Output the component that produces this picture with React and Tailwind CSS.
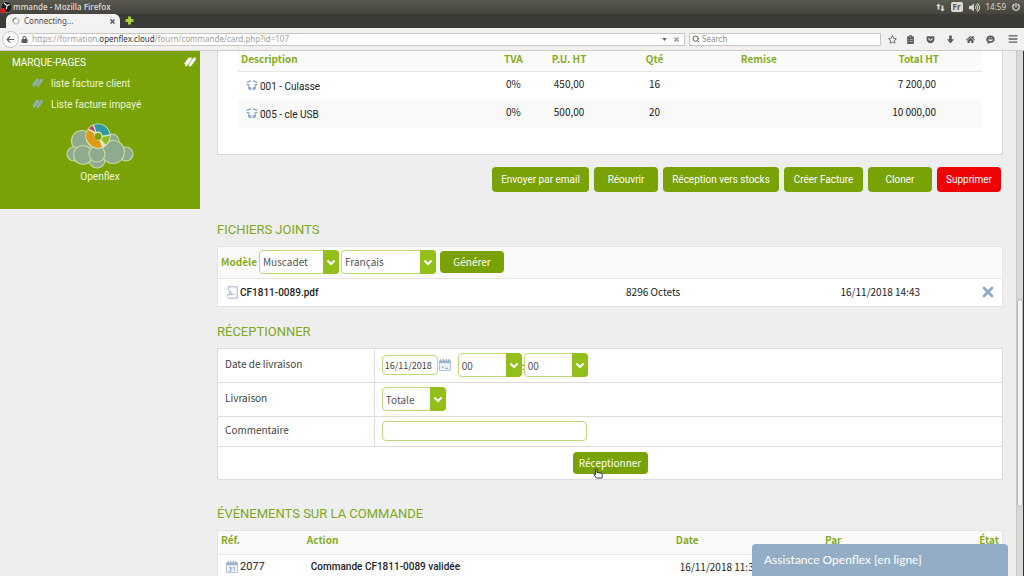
import React from "react";
import { FaRegStar, FaHome, FaBars, FaLock, FaPowerOff, FaVolumeUp, FaGetPocket } from "react-icons/fa";
import { FaArrowLeft, FaClipboardList } from "react-icons/fa6";
import { Search, X } from "lucide-react";

const items = [
    { label: "001 - Culasse", tva: "0%", price: "450,00", qty: "16", total: "7 200,00" },
    { label: "005 - cle USB", tva: "0%", price: "500,00", qty: "20", total: "10 000,00" },
];

const actions = [
    { name: "Envoyer par email", width: "w-[97px]" },
    { name: "Réouvrir", width: "w-16" },
    { name: "Réception vers stocks", width: "w-[116px]" },
    { name: "Créer Facture", width: "w-[79px]" },
    { name: "Cloner", width: "w-16" },
];

function BookmarkIcon({ className }) {
    return (
        <svg viewBox="0 0 12 10" className={className} fill="currentColor" aria-hidden="true">
            <path d="M0.2 6.6 4.4 1 6.4 0.2 7.8 0.8 7.4 2.8 3.6 8.2 1.6 9.8 1.3 7.6Z" />
            <path d="M4.4 8.2 8.8 1.4 10.6 0.2 11.9 1 11.6 3 7.6 8.6 5.6 9.9 5.3 8.6Z" />
        </svg>
    );
}

function ProductIcon() {
    return (
        <svg viewBox="0 0 12 11" className="h-[11px] w-3 shrink-0" aria-hidden="true">
            <path d="M0.6 2.4 4.8 0.9M7.2 0.9 11.4 2.4M0.6 4.4l3 0.8M11.4 4.4 8.4 5.2" stroke="#8ba6cc" strokeWidth="1.5" fill="none" />
            <path d="M2 6 5.4 7.6v2.8L2 9ZM10 6 6.6 7.6v2.8L10 9Z" fill="#8fa9cc" />
        </svg>
    );
}

function PdfIcon() {
    return (
        <svg viewBox="0 0 12 13" className="h-[13px] w-3 shrink-0" fill="none" stroke="#9fb2d2" strokeWidth="1" aria-hidden="true">
            <path d="M2.5 4.5V0.8h8.7v11.4H2.5v-1" />
            <path d="M0.6 10.4C2.6 9.2 4.4 6.6 4.2 4.4M4.2 4.8C4.4 7.4 6.4 8.8 8.4 8.6M2.6 8.8 6.6 8" />
        </svg>
    );
}

function CalendarIcon({ day }) {
    return (
        <svg viewBox="0 0 12 12" className="size-3 shrink-0" aria-hidden="true">
            <path d="M0.5 2.5h11v9h-11Z" fill="#eef3f9" stroke="#b4c5dc" />
            <path d="M0 1.6h12v2.6H0Z" fill="#9db4d3" />
            <path d="M2 0v2.4M4.6 0v2.4M7.2 0v2.4M9.8 0v2.4" stroke="#6f8cb8" strokeWidth="0.9" />
            {day ? (
                <path d="M3 6.4h2v1.4H3.6M5 6.4v3.8H3M7 6.8l1.2-0.6v4" stroke="#8fa9cc" fill="none" strokeWidth="0.9" />
            ) : (
                <path d="M2.5 8.2h2M6.2 9.4h3" stroke="#8fa9cc" strokeWidth="1.2" />
            )}
        </svg>
    );
}

function CloudLogo() {
    return (
        <svg viewBox="0 0 68 46" className="h-[46px] w-[68px]" aria-hidden="true">
            <g fill="#8eab90" stroke="#c6dba0" strokeWidth="1.2">
                <circle cx="46" cy="18" r="7" />
                <circle cx="16" cy="18" r="10.5" />
                <circle cx="8" cy="31" r="7" />
                <circle cx="60" cy="31" r="7" />
                <circle cx="31" cy="37" r="8" />
                <circle cx="17" cy="32" r="9.5" />
                <circle cx="47" cy="29" r="11.5" />
                <circle cx="31" cy="31" r="8" />
            </g>
            <circle cx="32" cy="13.2" r="12.6" fill="#dce9c4" />
            <path d="M28 1.8A12 12 0 0 1 43.8 11.6L36.5 12.4A4.6 4.6 0 0 0 30.4 8.7Z" fill="#2f9aa0" />
            <path d="M22.6 5.6A12 12 0 0 1 26.6 2.4L29.4 8.9Z" fill="#c93a6a" />
            <path d="M21.8 6.8A12 12 0 0 0 36 24L33.6 17.4A4.8 4.8 0 0 1 28.4 10.4Z" fill="#e09a12" />
            <path d="M36.8 14 44 12.8A12 12 0 0 1 39.5 21.8L35.4 16.6Z" fill="#8fbd22" />
            <circle cx="32" cy="13.4" r="3.4" fill="#78a206" />
        </svg>
    );
}

function GreenSelect({ id, label, value, width }) {
    return (
        <div className={`relative h-6 ${width}`}>
            <select
                id={id}
                aria-label={label}
                defaultValue={value}
                className="block h-full w-full appearance-none rounded border border-[#bcd977] bg-white pr-4 pl-[3px] text-[10px] font-normal text-[#555]"
            >
                <option>{value}</option>
            </select>
            <span className="pointer-events-none absolute inset-y-0 right-0 flex w-4 items-center justify-center rounded-r bg-[#93bf1b]">
                <svg viewBox="0 0 10 7" className="h-[7px] w-[10px]" fill="none" stroke="white" strokeWidth="2" aria-hidden="true">
                    <path d="M1.4 1.5 5 5 8.6 1.5" />
                </svg>
            </span>
        </div>
    );
}

function SectionTitle({ children, className }) {
    return <h2 className={`mb-1.5 font-[Roboto] text-[13px] leading-5 text-[#7fa81c] ${className}`}>{children}</h2>;
}

function BrowserChrome() {
    return (
        <header className="shrink-0 font-['Noto_Sans']">
            <div className="flex h-3.5 items-center justify-between bg-linear-to-b from-[#5a594f] to-[#45443e] pr-1 text-[8px] text-[#dfdbd2]">
                <div className="flex items-center">
                    <svg viewBox="0 0 13 13" className="size-[13px]" aria-hidden="true">
                        <circle cx="6.5" cy="6" r="5.6" fill="#1b1a1a" stroke="#8b8984" strokeWidth="0.7" />
                        <path d="M4 2.2 7 4.5 9.8 3.6M7 4.5 6.4 8" stroke="#dcdcdc" strokeWidth="1.3" fill="none" />
                        <circle cx="3" cy="9.6" r="2.6" fill="#f01414" />
                    </svg>
                    <span className="font-['Open_Sans'] font-semibold">mmande - Mozilla Firefox</span>
                </div>
                <div className="flex items-center gap-1.5">
                    <svg viewBox="0 0 9 9" className="size-[9px]" fill="currentColor" aria-hidden="true">
                        <path d="M2.5 0.5 4.8 3H3.4v3.5H1.6V3H0.2ZM6.5 8.5 4.2 6h1.4V2.5h1.8V6h1.4Z" />
                    </svg>
                    <span className="rounded-xs bg-[#dfdbd2] px-0.5 leading-[10px] font-bold text-[#55544c]">Fr</span>
                    <FaVolumeUp className="size-[11px]" />
                    <span>14:59</span>
                    <FaPowerOff className="size-2" />
                </div>
            </div>
            <div className="flex h-3.5 items-end bg-[#3c3b37]">
                <div className="ml-1.5 flex h-3.5 w-[114px] items-center rounded-t-md bg-[#f4f3f2] pr-1 pl-1.5 text-[8px] text-[#4c4c4c]">
                    <svg viewBox="0 0 8 8" className="mr-1 size-2" fill="none" stroke="#b5b5b5" strokeWidth="1.2" aria-hidden="true">
                        <circle cx="4" cy="4" r="3" />
                        <path d="M1 4A3 3 0 0 1 4 1" stroke="#777" />
                    </svg>
                    <span className="grow">Connecting…</span>
                    <X className="size-[7px]" strokeWidth={4} />
                </div>
                <svg viewBox="0 0 9 9" className="mb-[3px] ml-[5px] size-[9px]" fill="#a6cf3a" aria-hidden="true">
                    <path d="M3 0.5h3V3h2.5v3H6v2.5H3V6H0.5V3H3Z" />
                </svg>
            </div>
            <div className="flex h-[23px] items-center border-b border-[#cfcdca] bg-[#f2f1ef] pr-1.5 pl-0.5 text-[8px] text-[#5c5c5c]">
                <button type="button" aria-label="Back" className="flex size-[17px] shrink-0 items-center justify-center rounded-full border border-[#c4c2be] bg-white">
                    <FaArrowLeft className="size-[9px]" />
                </button>
                <div className="flex h-[13px] grow items-center border border-l-0 border-[#c9c7c3] bg-white pr-1 pl-0.5">
                    <FaLock className="mr-1 size-[7px] shrink-0" />
                    <span className="grow text-[#a0a0a0]">
                        https://formation.<span className="text-[#333]">openflex.cloud</span>/fourn/commande/card.php?id=107
                    </span>
                    <svg viewBox="0 0 6 4" className="mr-1.5 h-[3px] w-[5px]" fill="currentColor" aria-hidden="true">
                        <path d="M0 0h6L3 4Z" />
                    </svg>
                    <X className="size-[7px] text-[#8a93a0]" strokeWidth={4} />
                </div>
                <label className="ml-1 flex h-[13px] w-48 shrink-0 items-center border border-[#c9c7c3] bg-white px-0.5">
                    <Search className="mr-0.5 size-2 shrink-0" strokeWidth={3} />
                    <input type="text" placeholder="Search" aria-label="Search" className="w-full text-[8px] leading-3 placeholder:text-[#8d8d8d]" />
                </label>
                <div className="ml-[7px] flex shrink-0 items-center gap-[11px]">
                    <FaRegStar className="size-[9px]" />
                    <FaClipboardList className="-ml-0.5 size-[9px]" />
                    <FaGetPocket className="size-[9px]" />
                    <svg viewBox="0 0 9 9" className="size-[9px]" fill="currentColor" aria-hidden="true">
                        <path d="M3.2 0.5h2.6v3.7H8L4.5 8.5 1 4.2h2.2Z" />
                    </svg>
                    <FaHome className="size-[9px]" />
                    <svg viewBox="0 0 9 9" className="size-[9px]" aria-hidden="true">
                        <path d="M4.5 0.5C7 0.5 8.7 2 8.7 4.2S7 7.8 4.5 7.8L1.4 8.8 1.6 7C0.7 6.3 0.3 5.4 0.3 4.2 0.3 2 2 0.5 4.5 0.5Z" fill="currentColor" />
                        <path d="M2 4.4h5C6.6 6.6 2.4 6.6 2 4.4ZM2.8 2.2h1v1h-1ZM5.2 2.2h1v1h-1Z" fill="#f2f1ef" />
                    </svg>
                    <FaBars className="ml-0.5 size-2.5" />
                </div>
            </div>
        </header>
    );
}

function Sidebar() {
    return (
        <aside className="h-[158px] w-[200px] shrink-0 bg-[#78a206] font-[Roboto] text-[10px] text-white">
            <div className="flex h-[22px] items-center justify-between pr-1 pl-3">
                <h2>MARQUE-PAGES</h2>
                <BookmarkIcon className="h-2.5 w-3" />
            </div>
            <ul className="pl-8 text-[#eef5d8]">
                {["liste facture client", "Liste facture impayé"].map((name) => (
                    <li key={name} className="flex h-[21px] items-center gap-2">
                        <BookmarkIcon className="mb-0.5 h-2.5 w-[11px] text-[#8fb2b0]" />
                        <a href="#">{name}</a>
                    </li>
                ))}
            </ul>
            <div className="mt-2 flex flex-col items-center leading-4 text-[#f4f8e6]">
                <CloudLogo />
                Openflex
            </div>
        </aside>
    );
}

function ItemsPanel() {
    return (
        <div className="border border-t-0 border-[#d6d6d6] bg-white px-5 pb-[26px]">
            <table className="w-full table-fixed text-[10px] leading-4">
                <thead className="bg-[#fafafa] text-[#86ad1d]">
                    <tr className="h-5 border-b border-[#e6e6e6]">
                        <th className="w-[34%] pb-1 pl-[3px] text-left">Description</th>
                        <th className="w-[6%] pb-1">TVA</th>
                        <th className="w-[9%] pb-1">P.U. HT</th>
                        <th className="w-[14%] pb-1">Qté</th>
                        <th className="w-[14%] pb-1">Remise</th>
                        <th className="pr-[43px] pb-1 text-right">Total HT</th>
                    </tr>
                </thead>
                <tbody>
                    {items.map((item) => (
                        <tr key={item.label} className="h-7 text-center even:bg-[#f9f9f9]">
                            <td className="pl-2">
                                <div className="flex items-center gap-0.5 font-[Roboto]">
                                    <ProductIcon />
                                    <span className="pt-0.5">{item.label}</span>
                                </div>
                            </td>
                            <td className="pb-[3px]">{item.tva}</td>
                            <td className="pb-[3px]">{item.price}</td>
                            <td className="pb-[3px]">{item.qty}</td>
                            <td></td>
                            <td className="pr-[46px] pb-[3px] text-right">{item.total}</td>
                        </tr>
                    ))}
                </tbody>
            </table>
        </div>
    );
}

function FilesPanel() {
    return (
        <table className="w-full table-fixed border border-[#e4e4e4] bg-white text-[10px] leading-4">
            <colgroup>
                <col className="w-1/2" />
                <col className="w-[11%]" />
                <col className="w-[29%]" />
                <col />
            </colgroup>
            <thead className="bg-[#fafafa]">
                <tr className="h-8 border-b border-[#e6e6e6]">
                    <th colSpan={4} className="px-[3px]">
                        <div className="flex items-center gap-0.5">
                            <label htmlFor="modele" className="text-[#86ad1d]">Modèle</label>
                            <GreenSelect id="modele" value="Muscadet" width="w-20" />
                            <GreenSelect label="Langue" value="Français" width="w-[95px]" />
                            <button type="button" className="ml-0.5 h-[22px] w-16 rounded bg-[#78a206] font-normal text-white">
                                Générer
                            </button>
                        </div>
                    </th>
                </tr>
            </thead>
            <tbody>
                <tr className="h-7">
                    <td className="pl-2">
                        <a href="#" className="flex items-center gap-0.5 font-[Roboto] font-medium">
                            <PdfIcon />
                            <span className="pt-0.5">CF1811-0089.pdf</span>
                        </a>
                    </td>
                    <td className="text-center">8296 Octets</td>
                    <td className="pr-1 text-right">16/11/2018 14:43</td>
                    <td className="pr-1.5">
                        <button type="button" aria-label="Supprimer le fichier" className="ml-auto block text-[#8ea8c6]">
                            <X className="size-4" strokeWidth={4} />
                        </button>
                    </td>
                </tr>
            </tbody>
        </table>
    );
}

function ReceptionForm() {
    return (
        <form className="divide-y divide-[#dcdcdc] border border-[#dcdcdc] bg-white text-[10px] text-[#444]">
            <div className="flex h-[34px]">
                <label htmlFor="date" className="w-1/5 border-r border-[#dcdcdc] px-[7px] pt-[7px] leading-4">Date de livraison</label>
                <div className="flex items-center px-[7px]">
                    <input id="date" type="text" defaultValue="16/11/2018" className="h-5 w-14 rounded border border-[#bcd977] px-0.5 text-[9px]" />
                    <span className="mr-[7px] ml-px">
                        <CalendarIcon />
                    </span>
                    <GreenSelect label="Heure" value="00" width="w-16" />
                    <span className="w-0.5">:</span>
                    <GreenSelect label="Minute" value="00" width="w-16" />
                </div>
            </div>
            <div className="flex h-[34px]">
                <label htmlFor="livraison" className="w-1/5 border-r border-[#dcdcdc] px-[7px] pt-[7px] leading-4">Livraison</label>
                <div className="flex items-center px-[7px]">
                    <GreenSelect id="livraison" value="Totale" width="w-16" />
                </div>
            </div>
            <div className="flex h-[30px]">
                <label htmlFor="comment" className="w-1/5 border-r border-[#dcdcdc] px-[7px] pt-[5px] leading-4">Commentaire</label>
                <div className="flex items-center px-[7px]">
                    <input id="comment" type="text" className="h-5 w-[205px] rounded border border-[#bcd977] px-1" />
                </div>
            </div>
            <div className="flex h-8 items-center justify-center">
                <div className="relative">
                    <button type="button" className="block h-[22px] w-[75px] rounded bg-[#78a206] text-white">
                        Réceptionner
                    </button>
                    <svg viewBox="0 0 10 12" className="absolute top-4 left-5 h-3 w-2.5" aria-hidden="true">
                        <path d="M2.6 1c1-0.4 1.4 0.3 1.4 1v2.4l4 0.8c1 0.2 1.4 0.8 1.3 1.6L9 10H3.4L1 6.8C0.6 6 1.6 5.6 2.6 6.8Z" fill="white" stroke="#222" strokeWidth="0.9" />
                    </svg>
                </div>
            </div>
        </form>
    );
}

function EventsPanel() {
    return (
        <table className="w-full table-fixed border border-[#e4e4e4] bg-white text-[10px] leading-4">
            <thead className="bg-[#fafafa] text-left text-[#86ad1d]">
                <tr className="h-6 border-b border-[#e6e6e6]">
                    <th className="w-[11%] pb-1 pl-[3px]">Réf.</th>
                    <th className="w-[47%] pb-1 pl-[3px]">Action</th>
                    <th className="w-[19%] pb-1 pl-[3px]">Date</th>
                    <th className="w-[13%] pb-1 pl-[3px]">Par</th>
                    <th className="pr-[3px] pb-1 text-right">État</th>
                </tr>
            </thead>
            <tbody>
                <tr className="h-7">
                    <td className="pb-0.5 pl-2">
                        <a href="#" className="flex items-center gap-0.5 font-[Roboto] text-[11px]">
                            <CalendarIcon day />
                            2077
                        </a>
                    </td>
                    <td className="pb-0.5 pl-[7px] font-[Roboto] font-medium">Commande CF1811-0089 validée</td>
                    <td className="pb-0.5 pl-[7px]">16/11/2018 11:32</td>
                    <td></td>
                    <td></td>
                </tr>
            </tbody>
        </table>
    );
}

export default function App() {
    return (
        <div className="flex h-screen flex-col overflow-hidden bg-[#eee] font-['Noto_Sans_CJK_SC',sans-serif] text-[#222]">
            <BrowserChrome />
            <div className="flex min-h-0 grow">
                <Sidebar />
                <main className="min-w-0 grow overflow-hidden pr-[13px] pl-[17px]">
                    <ItemsPanel />
                    <div className="mt-3 mr-0.5 flex justify-end gap-[5px] font-[Roboto] text-[10px] text-white">
                        {actions.map(({ name, width }) => (
                            <button key={name} type="button" className={`h-[25px] rounded bg-[#78a206] ${width}`}>
                                {name}
                            </button>
                        ))}
                        <button type="button" className="h-[25px] w-16 rounded bg-[#ee0404]">Supprimer</button>
                    </div>
                    <SectionTitle className="mt-7">FICHIERS JOINTS</SectionTitle>
                    <FilesPanel />
                    <SectionTitle className="mt-[15px]">RÉCEPTIONNER</SectionTitle>
                    <ReceptionForm />
                    <SectionTitle className="mt-6">ÉVÉNEMENTS SUR LA COMMANDE</SectionTitle>
                    <EventsPanel />
                </main>
                {/* Scrollbar */}
                <div className="flex w-2 shrink-0 flex-col border-r border-l border-r-[#333] border-l-[#c8c6c2] bg-[#dad8d5]">
                    <div className="h-[248px]"></div>
                    <div className="h-[208px] rounded-sm border border-[#bbb9b5] bg-[#f4f3f2]"></div>
                </div>
            </div>
            <button type="button" className="fixed right-4 bottom-0 h-8 w-64 rounded-t bg-[#93adc6] px-3 text-left font-[Lato] text-xs text-white">
                Assistance Openflex [en ligne]
            </button>
        </div>
    );
}
